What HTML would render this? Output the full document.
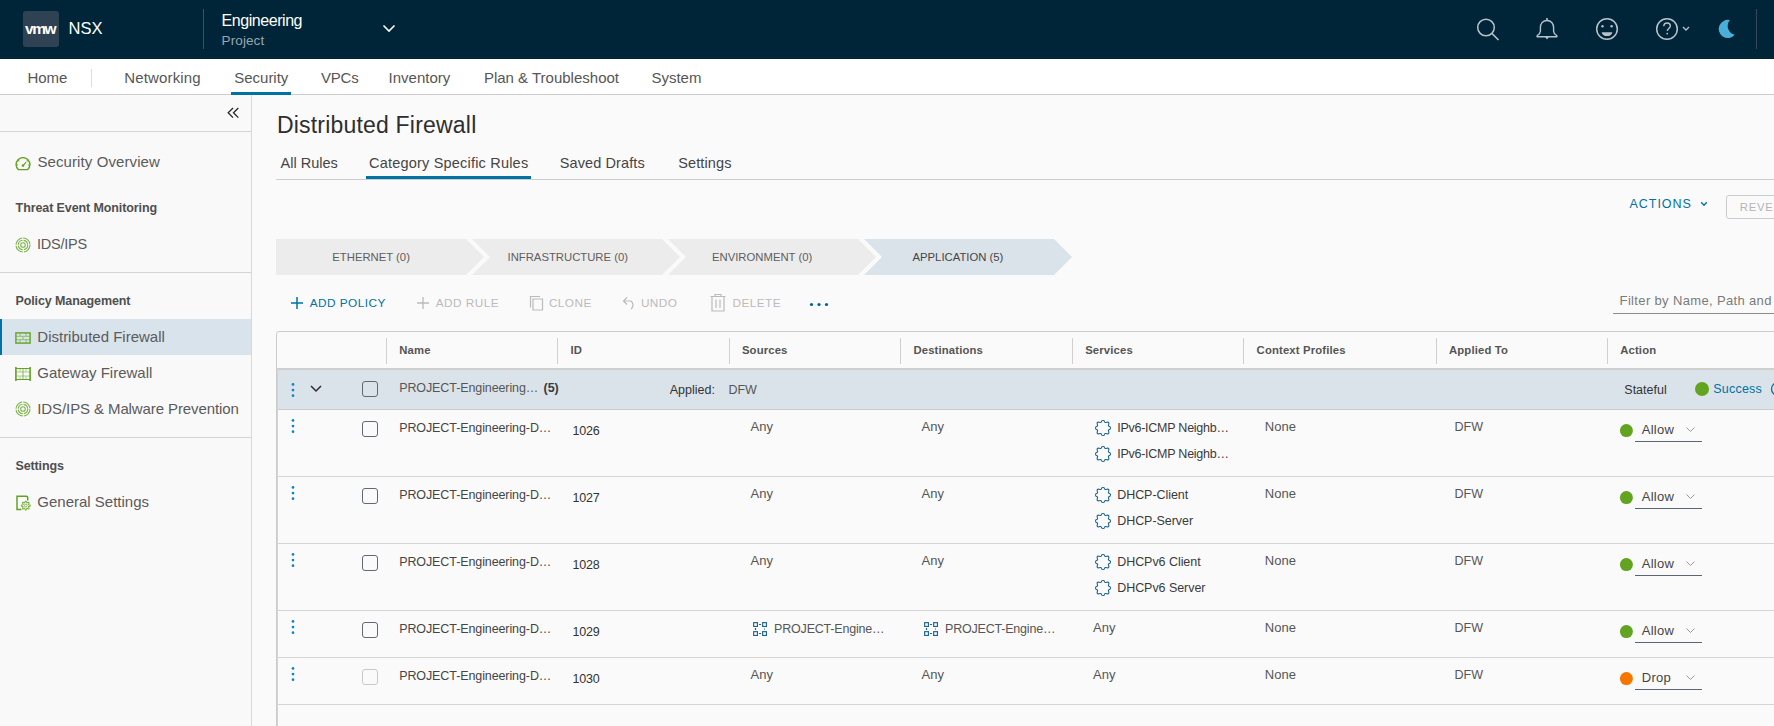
<!DOCTYPE html>
<html><head><meta charset="utf-8"><style>
html,body{margin:0;padding:0;}
body{width:1774px;height:726px;overflow:hidden;position:relative;background:#fafafa;font-family:"Liberation Sans",sans-serif;}
.t{position:absolute;line-height:1;white-space:nowrap;}
.r{position:absolute;display:block;}
</style></head><body>
<div class="r" style="left:0px;top:0px;width:1774px;height:59px;background:#002538;"></div>
<div class="r" style="left:23px;top:11px;width:36px;height:36px;background:#2f4254;border-radius:3px;"></div>
<div class="t" style="left:25.0px;top:20.68px;font-size:15.5px;color:#fff;font-weight:700;letter-spacing:-1.4px;">vmw</div>
<div class="t" style="left:68.6px;top:20.23px;font-size:16.5px;color:#fff;">NSX</div>
<div class="r" style="left:203px;top:9px;width:1px;height:40px;background:#3c5162;"></div>
<div class="t" style="left:221.6px;top:12.96px;font-size:16px;color:#fff;letter-spacing:-0.45px;">Engineering</div>
<div class="t" style="left:221.6px;top:34.27px;font-size:13.5px;color:#9aa6b0;letter-spacing:0.1px;">Project</div>
<svg class="r" style="left:382px;top:23px;" width="14" height="11" viewBox="0 0 14 11"><path d="M1.5 2.5 L7 8 L12.5 2.5" fill="none" stroke="#fff" stroke-width="1.6"/></svg>
<svg class="r" style="left:1474px;top:16px;" width="28" height="28" viewBox="0 0 28 28"><circle cx="12" cy="11.5" r="8.3" fill="none" stroke="#b9c2c9" stroke-width="1.5"/><path d="M18 17.5 L24.5 24" stroke="#b9c2c9" stroke-width="1.6"/></svg>
<svg class="r" style="left:1535px;top:16px;" width="24" height="26" viewBox="0 0 24 26"><path d="M12 4.5 c-4 0 -6.6 3 -6.6 7.3 v3.4 c0 1.8 -1.3 3.2 -3.3 4.6 v0.9 h19.8 v-0.9 c-2 -1.4 -3.3 -2.8 -3.3 -4.6 v-3.4 c0 -4.3 -2.6 -7.3 -6.6 -7.3z" fill="none" stroke="#b9c2c9" stroke-width="1.4" stroke-linejoin="round"/><path d="M12 2 V4.5" stroke="#b9c2c9" stroke-width="1.6"/><path d="M10.2 21 h3.6 l-1.8 2.6z" fill="#b9c2c9"/></svg>
<svg class="r" style="left:1594px;top:16px;" width="26" height="26" viewBox="0 0 26 26"><circle cx="13" cy="13" r="10.3" fill="none" stroke="#b9c2c9" stroke-width="1.5"/><circle cx="8.5" cy="10.3" r="1.2" fill="#b9c2c9"/><circle cx="17.6" cy="10.3" r="1.2" fill="#b9c2c9"/><path d="M7.6 16.2 h10.8 c-0.6 2.6 -2.8 3.9 -5.4 3.9 s-4.8 -1.3 -5.4 -3.9z" fill="#b9c2c9"/></svg>
<svg class="r" style="left:1654px;top:16px;" width="38" height="26" viewBox="0 0 38 26"><circle cx="13" cy="13" r="10.3" fill="none" stroke="#b9c2c9" stroke-width="1.5"/><path d="M9.8 10.3 c0 -2 1.4 -3.3 3.3 -3.3 s3.2 1.3 3.2 3 c0 2.4 -3 2.6 -3 5" fill="none" stroke="#b9c2c9" stroke-width="1.4"/><circle cx="13.2" cy="17.6" r="0.9" fill="#b9c2c9"/><path d="M29 11 l3 3 l3 -3" fill="none" stroke="#b9c2c9" stroke-width="1.3"/></svg>
<svg class="r" style="left:1716px;top:17px;" width="22" height="24" viewBox="0 0 22 24"><path d="M13.9 3.1 A9.1 9.1 0 1 0 18.8 17.8 A9 9 0 0 1 13.9 3.1z" fill="#49afd9"/></svg>
<div class="r" style="left:1756px;top:9px;width:1px;height:40px;background:#34495a;"></div>
<div class="r" style="left:0px;top:59px;width:1774px;height:35px;background:#ffffff;"></div>
<div class="r" style="left:0px;top:94px;width:1774px;height:1px;background:#cccccc;"></div>
<div class="t" style="left:27.4px;top:70.30px;font-size:15px;color:#565656;">Home</div>
<div class="r" style="left:91px;top:69px;width:1px;height:18px;background:#dddddd;"></div>
<div class="t" style="left:124.3px;top:70.30px;font-size:15px;color:#565656;letter-spacing:0.15px;">Networking</div>
<div class="t" style="left:234.2px;top:70.30px;font-size:15px;color:#565656;">Security</div>
<div class="r" style="left:231px;top:92px;width:60px;height:3px;background:#0072a3;"></div>
<div class="t" style="left:320.9px;top:70.30px;font-size:15px;color:#565656;letter-spacing:-0.2px;">VPCs</div>
<div class="t" style="left:388.6px;top:70.30px;font-size:15px;color:#565656;">Inventory</div>
<div class="t" style="left:483.9px;top:70.30px;font-size:15px;color:#565656;">Plan &amp; Troubleshoot</div>
<div class="t" style="left:651.4px;top:70.30px;font-size:15px;color:#565656;">System</div>
<div class="r" style="left:0px;top:95px;width:251px;height:631px;background:#f9f9f9;"></div>
<div class="r" style="left:251px;top:95px;width:1px;height:631px;background:#d9d9d9;"></div>
<svg class="r" style="left:225px;top:105px;" width="16" height="16" viewBox="0 0 16 16"><path d="M8 3 L3.2 7.8 L8 12.6 M13.3 3 L8.5 7.8 L13.3 12.6" fill="none" stroke="#262626" stroke-width="1.3"/></svg>
<div class="r" style="left:0px;top:131px;width:251px;height:1px;background:#d5d5d5;"></div>
<svg class="r" style="left:15px;top:157px;" width="16" height="14" viewBox="0 0 16 14"><path d="M3.3 12.6 A6.9 6.9 0 1 1 12.7 12.6 Z" fill="none" stroke="#62a420" stroke-width="1.4" stroke-linejoin="round"/><path d="M8 8.6 L11.2 5.2 M1.5 8 H3 M13 8 H14.5 M3.3 3.3 L4.3 4.3 M12.7 3.3 L11.7 4.3" stroke="#62a420" stroke-width="1.1"/><circle cx="8" cy="8.6" r="1.3" fill="#62a420"/></svg>
<div class="t" style="left:37.4px;top:153.90px;font-size:15px;color:#5b5b5b;letter-spacing:0.1px;">Security Overview</div>
<div class="t" style="left:15.6px;top:202.12px;font-size:12.5px;color:#4f4f4f;font-weight:700;letter-spacing:-0.1px;">Threat Event Monitoring</div>
<svg class="r" style="left:15px;top:237px;" width="16" height="16" viewBox="0 0 16 16"><circle cx="8" cy="8" r="7" fill="none" stroke="#62a420" stroke-width="1.1" stroke-dasharray="10 1" opacity="0.8"/><circle cx="8" cy="8" r="4.7" fill="none" stroke="#62a420" stroke-width="1.1" stroke-dasharray="6.3 1.1" opacity="0.8"/><circle cx="8" cy="8" r="2.3" fill="none" stroke="#62a420" stroke-width="1.1" opacity="0.8"/></svg>
<div class="t" style="left:37.1px;top:237.13px;font-size:14.5px;color:#5b5b5b;letter-spacing:-0.25px;">IDS/IPS</div>
<div class="r" style="left:0px;top:272px;width:251px;height:1px;background:#d5d5d5;"></div>
<div class="t" style="left:15.4px;top:295.02px;font-size:12.5px;color:#4f4f4f;font-weight:700;letter-spacing:-0.1px;">Policy Management</div>
<div class="r" style="left:0px;top:319px;width:251px;height:36px;background:#d9e3eb;"></div>
<div class="r" style="left:0px;top:319px;width:2px;height:36px;background:#0072a3;"></div>
<svg class="r" style="left:15px;top:332px;" width="16" height="12" viewBox="0 0 16 12"><rect x="0.9" y="0.9" width="14.2" height="10.2" fill="none" stroke="#62a420" stroke-width="1.4"/><path d="M1 4.3 H15 M1 7.7 H15 M5 1 V4.3 M11 1 V4.3 M8 4.3 V7.7 M5 7.7 V11 M11 7.7 V11" stroke="#62a420" stroke-width="1" opacity="0.6"/></svg>
<div class="t" style="left:37.3px;top:328.90px;font-size:15px;color:#5b5b5b;">Distributed Firewall</div>
<svg class="r" style="left:15px;top:367px;" width="16" height="14" viewBox="0 0 16 14"><path d="M0.9 0 V14 M15.1 0 V14" stroke="#62a420" stroke-width="1.6" fill="none"/><path d="M1 1.5 H15 M1 12.5 H15" stroke="#62a420" stroke-width="1.2" fill="none"/><path d="M1 5 H15 M1 9 H15 M5 1 V5 M11 1 V5 M5 9 V13 M11 9 V13" stroke="#62a420" stroke-width="1" opacity="0.5"/><path d="M8 1.5 V12.5" stroke="#62a420" stroke-width="2" opacity="0.35"/></svg>
<div class="t" style="left:37.3px;top:364.90px;font-size:15px;color:#5b5b5b;">Gateway Firewall</div>
<svg class="r" style="left:15px;top:401px;" width="16" height="16" viewBox="0 0 16 16"><circle cx="8" cy="8" r="7" fill="none" stroke="#62a420" stroke-width="1.1" stroke-dasharray="10 1" opacity="0.8"/><circle cx="8" cy="8" r="4.7" fill="none" stroke="#62a420" stroke-width="1.1" stroke-dasharray="6.3 1.1" opacity="0.8"/><circle cx="8" cy="8" r="2.3" fill="none" stroke="#62a420" stroke-width="1.1" opacity="0.8"/></svg>
<div class="t" style="left:37.3px;top:400.70px;font-size:15px;color:#5b5b5b;letter-spacing:-0.1px;">IDS/IPS &amp; Malware Prevention</div>
<div class="r" style="left:0px;top:437px;width:251px;height:1px;background:#d5d5d5;"></div>
<div class="t" style="left:15.4px;top:460.02px;font-size:12.5px;color:#4f4f4f;font-weight:700;letter-spacing:-0.1px;">Settings</div>
<svg class="r" style="left:15px;top:495px;" width="18" height="16" viewBox="0 0 18 16"><path d="M6.5 14.6 H2 V1.2 H11.3 A1.4 1.4 0 0 1 12.7 2.6 V5.6" fill="none" stroke="#62a420" stroke-width="1.5"/><polygon points="10.80,6.10 11.22,6.35 11.52,6.97 11.71,7.60 11.91,7.92 12.28,7.84 12.86,7.52 13.51,7.30 13.98,7.42 14.10,7.89 13.88,8.54 13.56,9.12 13.48,9.49 13.80,9.69 14.43,9.88 15.05,10.18 15.30,10.60 15.05,11.02 14.43,11.32 13.80,11.51 13.48,11.71 13.56,12.08 13.88,12.66 14.10,13.31 13.98,13.78 13.51,13.90 12.86,13.68 12.28,13.36 11.91,13.28 11.71,13.60 11.52,14.23 11.22,14.85 10.80,15.10 10.38,14.85 10.08,14.23 9.89,13.60 9.69,13.28 9.32,13.36 8.74,13.68 8.09,13.90 7.62,13.78 7.50,13.31 7.72,12.66 8.04,12.08 8.12,11.71 7.80,11.51 7.17,11.32 6.55,11.02 6.30,10.60 6.55,10.18 7.17,9.88 7.80,9.69 8.12,9.49 8.04,9.12 7.72,8.54 7.50,7.89 7.62,7.42 8.09,7.30 8.74,7.52 9.32,7.84 9.69,7.92 9.89,7.60 10.08,6.97 10.38,6.35" fill="none" stroke="#62a420" stroke-width="1.05" opacity="0.85"/><circle cx="10.8" cy="10.6" r="1.4" fill="none" stroke="#62a420" stroke-width="0.9" opacity="0.8"/></svg>
<div class="t" style="left:37.3px;top:493.90px;font-size:15px;color:#5b5b5b;">General Settings</div>
<div class="r" style="left:252px;top:95px;width:1522px;height:631px;background:#fafafa;"></div>
<div class="t" style="left:276.9px;top:113.53px;font-size:23px;color:#2e2e2e;letter-spacing:0.2px;">Distributed Firewall</div>
<div class="t" style="left:280.6px;top:155.93px;font-size:14.5px;color:#454545;">All Rules</div>
<div class="t" style="left:369.0px;top:155.93px;font-size:14.5px;color:#454545;letter-spacing:0.2px;">Category Specific Rules</div>
<div class="t" style="left:559.8px;top:155.93px;font-size:14.5px;color:#454545;letter-spacing:0.1px;">Saved Drafts</div>
<div class="t" style="left:678.3px;top:155.93px;font-size:14.5px;color:#454545;letter-spacing:0.1px;">Settings</div>
<div class="r" style="left:276px;top:179px;width:1498px;height:1px;background:#cccccc;"></div>
<div class="r" style="left:366px;top:176px;width:165px;height:3px;background:#0072a3;"></div>
<div class="t" style="left:1629.4px;top:198.42px;font-size:12.5px;color:#0072a3;letter-spacing:1.0px;">ACTIONS</div>
<svg class="r" style="left:1699px;top:200px;" width="10" height="8" viewBox="0 0 10 8"><path d="M2.2 2.3 L5 5.2 L7.8 2.3" fill="none" stroke="#0072a3" stroke-width="1.3"/></svg>
<div class="r" style="left:1726px;top:195px;width:60px;height:24px;background:transparent;border:1px solid #cccccc;border-radius:3px;box-sizing:border-box;"></div>
<div class="t" style="left:1739.8px;top:202.33px;font-size:11.3px;color:#b5b5b5;letter-spacing:0.75px;">REVERT</div>
<svg class="r" style="left:276px;top:239px;" width="210" height="36" viewBox="0 0 210 36"><polygon points="0,0 190,0 208,18 190,36 0,36" fill="#ececec"/></svg>
<svg class="r" style="left:472px;top:239px;" width="210" height="36" viewBox="0 0 210 36"><polygon points="0,0 190,0 208,18 190,36 0,36 18,18" fill="#ececec"/></svg>
<svg class="r" style="left:668px;top:239px;" width="210" height="36" viewBox="0 0 210 36"><polygon points="0,0 190,0 208,18 190,36 0,36 18,18" fill="#ececec"/></svg>
<svg class="r" style="left:864px;top:239px;" width="210" height="36" viewBox="0 0 210 36"><polygon points="0,0 190,0 208,18 190,36 0,36 18,18" fill="#dbe3ea"/></svg>
<div class="t" style="left:332.3px;top:252.13px;font-size:11.3px;color:#5e5e5e;">ETHERNET (0)</div>
<div class="t" style="left:507.5px;top:252.13px;font-size:11.3px;color:#5e5e5e;">INFRASTRUCTURE (0)</div>
<div class="t" style="left:712.0px;top:252.13px;font-size:11.3px;color:#5e5e5e;">ENVIRONMENT (0)</div>
<div class="t" style="left:912.5px;top:252.13px;font-size:11.3px;color:#454545;">APPLICATION (5)</div>
<svg class="r" style="left:290px;top:296px;" width="14" height="14" viewBox="0 0 14 14"><path d="M7 1 V13 M1 7 H13" stroke="#0072a3" stroke-width="1.5"/></svg>
<div class="t" style="left:309.8px;top:297.71px;font-size:11.8px;color:#0072a3;letter-spacing:0.45px;">ADD POLICY</div>
<svg class="r" style="left:416px;top:296px;" width="14" height="14" viewBox="0 0 14 14"><path d="M7 1 V13 M1 7 H13" stroke="#bbbbbb" stroke-width="1.3"/></svg>
<div class="t" style="left:435.8px;top:297.71px;font-size:11.8px;color:#bbbbbb;letter-spacing:0.45px;">ADD RULE</div>
<svg class="r" style="left:529px;top:295px;" width="15" height="16" viewBox="0 0 15 16"><path d="M4 4 H13.5 V15 H4 Z M1.5 12.5 V1.5 H11" fill="none" stroke="#bbbbbb" stroke-width="1.2"/></svg>
<div class="t" style="left:548.9px;top:297.71px;font-size:11.8px;color:#bbbbbb;letter-spacing:0.45px;">CLONE</div>
<svg class="r" style="left:622px;top:295px;" width="16" height="16" viewBox="0 0 16 16"><path d="M5 2.5 L1.5 6 L5 9.5 M1.5 6 H9 A5 5 0 0 1 9 14" fill="none" stroke="#bbbbbb" stroke-width="1.2"/></svg>
<div class="t" style="left:640.9px;top:297.71px;font-size:11.8px;color:#bbbbbb;letter-spacing:0.45px;">UNDO</div>
<svg class="r" style="left:709px;top:293px;" width="18" height="20" viewBox="0 0 18 20"><path d="M1.5 3.5 H16.5 M6 3.5 V1.5 H12 V3.5 M3 3.5 V18 H15 V3.5 M7 6.5 V15 M11 6.5 V15" fill="none" stroke="#bbbbbb" stroke-width="1.2"/></svg>
<div class="t" style="left:732.5px;top:297.71px;font-size:11.8px;color:#bbbbbb;letter-spacing:0.45px;">DELETE</div>
<svg class="r" style="left:808px;top:301px;" width="22" height="7" viewBox="0 0 22 7"><circle cx="3.5" cy="3.5" r="1.6" fill="#005f99"/><circle cx="11" cy="3.5" r="1.6" fill="#005f99"/><circle cx="18.5" cy="3.5" r="1.6" fill="#005f99"/></svg>
<div class="t" style="left:1619.6px;top:293.70px;font-size:13px;color:#7a7a7a;letter-spacing:0.35px;">Filter by Name, Path and more</div>
<div class="r" style="left:1613px;top:313px;width:161px;height:1px;background:#8c8c8c;"></div>
<div class="r" style="left:276px;top:331px;width:1600px;height:500px;background:transparent;border:1px solid #cccccc;border-radius:3px;box-sizing:border-box;"></div>
<div class="r" style="left:277px;top:368px;width:1497px;height:2px;background:#cfcfcf;"></div>
<div class="r" style="left:386px;top:338px;width:1px;height:26px;background:#d0d0d0;"></div>
<div class="r" style="left:557px;top:338px;width:1px;height:26px;background:#d0d0d0;"></div>
<div class="r" style="left:729px;top:338px;width:1px;height:26px;background:#d0d0d0;"></div>
<div class="r" style="left:900px;top:338px;width:1px;height:26px;background:#d0d0d0;"></div>
<div class="r" style="left:1072px;top:338px;width:1px;height:26px;background:#d0d0d0;"></div>
<div class="r" style="left:1243px;top:338px;width:1px;height:26px;background:#d0d0d0;"></div>
<div class="r" style="left:1436px;top:338px;width:1px;height:26px;background:#d0d0d0;"></div>
<div class="r" style="left:1607px;top:338px;width:1px;height:26px;background:#d0d0d0;"></div>
<div class="t" style="left:399.3px;top:345.23px;font-size:11.3px;color:#555555;font-weight:700;letter-spacing:0.15px;">Name</div>
<div class="t" style="left:570.5px;top:345.23px;font-size:11.3px;color:#555555;font-weight:700;letter-spacing:0.15px;">ID</div>
<div class="t" style="left:741.9px;top:345.23px;font-size:11.3px;color:#555555;font-weight:700;letter-spacing:0.15px;">Sources</div>
<div class="t" style="left:913.4px;top:345.23px;font-size:11.3px;color:#555555;font-weight:700;letter-spacing:0.15px;">Destinations</div>
<div class="t" style="left:1085.2px;top:345.23px;font-size:11.3px;color:#555555;font-weight:700;letter-spacing:0.15px;">Services</div>
<div class="t" style="left:1256.6px;top:345.23px;font-size:11.3px;color:#555555;font-weight:700;letter-spacing:0.15px;">Context Profiles</div>
<div class="t" style="left:1449.0px;top:345.23px;font-size:11.3px;color:#555555;font-weight:700;letter-spacing:0.15px;">Applied To</div>
<div class="t" style="left:1620.2px;top:345.23px;font-size:11.3px;color:#555555;font-weight:700;letter-spacing:0.15px;">Action</div>
<div class="r" style="left:277px;top:370px;width:1497px;height:39px;background:#dbe3ea;"></div>
<div class="r" style="left:277px;top:409px;width:1497px;height:1px;background:#cccccc;"></div>
<svg class="r" style="left:290px;top:382px;" width="6" height="16" viewBox="0 0 6 16"><circle cx="3" cy="2.4" r="1.35" fill="#0a85c7"/><circle cx="3" cy="8.05" r="1.35" fill="#0a85c7"/><circle cx="3" cy="13.7" r="1.35" fill="#0a85c7"/></svg>
<svg class="r" style="left:309px;top:384px;" width="14" height="10" viewBox="0 0 14 10"><path d="M2 2 L7 7 L12 2" fill="none" stroke="#2d2d2d" stroke-width="1.5"/></svg>
<div class="r" style="left:362px;top:381px;width:16px;height:16px;background:transparent;border:1px solid #5f6a74;border-radius:3px;box-sizing:border-box;"></div>
<div class="t" style="left:399.2px;top:382.42px;font-size:12.5px;color:#565656;letter-spacing:-0.1px;">PROJECT-Engineering…</div>
<div class="t" style="left:543.5px;top:382.42px;font-size:12.5px;color:#3a3a3a;font-weight:700;">(5)</div>
<div class="t" style="left:669.7px;top:383.72px;font-size:12.5px;color:#333;">Applied:</div>
<div class="t" style="left:728.4px;top:383.72px;font-size:12.5px;color:#565656;">DFW</div>
<div class="t" style="left:1624.3px;top:383.72px;font-size:12.5px;color:#333;">Stateful</div>
<svg class="r" style="left:1694px;top:381px;" width="16" height="16" viewBox="0 0 16 16"><circle cx="8" cy="8" r="7" fill="#62a420"/></svg>
<div class="t" style="left:1713.3px;top:382.92px;font-size:12.5px;color:#0072a3;letter-spacing:0.2px;">Success</div>
<svg class="r" style="left:1770px;top:381px;" width="14" height="16" viewBox="0 0 14 16"><circle cx="8" cy="8" r="6.5" fill="none" stroke="#0072a3" stroke-width="1.3"/></svg>
<div class="r" style="left:277px;top:476px;width:1497px;height:1px;background:#d5d5d5;"></div>
<svg class="r" style="left:290px;top:418px;" width="6" height="16" viewBox="0 0 6 16"><circle cx="3" cy="2.4" r="1.35" fill="#0a85c7"/><circle cx="3" cy="8.05" r="1.35" fill="#0a85c7"/><circle cx="3" cy="13.7" r="1.35" fill="#0a85c7"/></svg>
<div class="r" style="left:362px;top:421px;width:16px;height:16px;background:transparent;border:1px solid #5f6a74;border-radius:3px;box-sizing:border-box;"></div>
<div class="t" style="left:399.2px;top:422.22px;font-size:12.5px;color:#454545;letter-spacing:-0.1px;">PROJECT-Engineering-D…</div>
<div class="t" style="left:572.4px;top:425.22px;font-size:12.5px;color:#333;letter-spacing:-0.2px;">1026</div>
<div class="t" style="left:750.5px;top:420.00px;font-size:13px;color:#565656;">Any</div>
<div class="t" style="left:921.5px;top:420.00px;font-size:13px;color:#565656;">Any</div>
<svg class="r" style="left:1095px;top:420px;" width="16" height="16" viewBox="0 0 16 16"><polygon points="8.00,0.10 8.75,0.43 9.35,1.23 9.80,2.07 10.26,2.55 10.92,2.54 11.83,2.26 12.83,2.12 13.59,2.41 13.88,3.17 13.74,4.17 13.46,5.08 13.45,5.74 13.93,6.20 14.77,6.65 15.57,7.25 15.90,8.00 15.57,8.75 14.77,9.35 13.93,9.80 13.45,10.26 13.46,10.92 13.74,11.83 13.88,12.83 13.59,13.59 12.83,13.88 11.83,13.74 10.92,13.46 10.26,13.45 9.80,13.93 9.35,14.77 8.75,15.57 8.00,15.90 7.25,15.57 6.65,14.77 6.20,13.93 5.74,13.45 5.08,13.46 4.17,13.74 3.17,13.88 2.41,13.59 2.12,12.83 2.26,11.83 2.54,10.92 2.55,10.26 2.07,9.80 1.23,9.35 0.43,8.75 0.10,8.00 0.43,7.25 1.23,6.65 2.07,6.20 2.55,5.74 2.54,5.08 2.26,4.17 2.12,3.17 2.41,2.41 3.17,2.12 4.17,2.26 5.08,2.54 5.74,2.55 6.20,2.07 6.65,1.23 7.25,0.43" fill="none" stroke="#1f6590" stroke-width="1.1"/></svg>
<div class="t" style="left:1117.2px;top:422.22px;font-size:12.5px;color:#3a3a3a;letter-spacing:-0.25px;">IPv6-ICMP Neighb…</div>
<svg class="r" style="left:1095px;top:446px;" width="16" height="16" viewBox="0 0 16 16"><polygon points="8.00,0.10 8.75,0.43 9.35,1.23 9.80,2.07 10.26,2.55 10.92,2.54 11.83,2.26 12.83,2.12 13.59,2.41 13.88,3.17 13.74,4.17 13.46,5.08 13.45,5.74 13.93,6.20 14.77,6.65 15.57,7.25 15.90,8.00 15.57,8.75 14.77,9.35 13.93,9.80 13.45,10.26 13.46,10.92 13.74,11.83 13.88,12.83 13.59,13.59 12.83,13.88 11.83,13.74 10.92,13.46 10.26,13.45 9.80,13.93 9.35,14.77 8.75,15.57 8.00,15.90 7.25,15.57 6.65,14.77 6.20,13.93 5.74,13.45 5.08,13.46 4.17,13.74 3.17,13.88 2.41,13.59 2.12,12.83 2.26,11.83 2.54,10.92 2.55,10.26 2.07,9.80 1.23,9.35 0.43,8.75 0.10,8.00 0.43,7.25 1.23,6.65 2.07,6.20 2.55,5.74 2.54,5.08 2.26,4.17 2.12,3.17 2.41,2.41 3.17,2.12 4.17,2.26 5.08,2.54 5.74,2.55 6.20,2.07 6.65,1.23 7.25,0.43" fill="none" stroke="#1f6590" stroke-width="1.1"/></svg>
<div class="t" style="left:1117.2px;top:448.22px;font-size:12.5px;color:#3a3a3a;letter-spacing:-0.25px;">IPv6-ICMP Neighb…</div>
<div class="t" style="left:1264.8px;top:420.00px;font-size:13px;color:#565656;">None</div>
<div class="t" style="left:1454.5px;top:421.22px;font-size:12.5px;color:#565656;">DFW</div>
<svg class="r" style="left:1619px;top:423px;" width="15" height="15" viewBox="0 0 15 15"><circle cx="7.4" cy="7.6" r="6.5" fill="#62a420"/></svg>
<div class="t" style="left:1641.7px;top:422.50px;font-size:13px;color:#454545;letter-spacing:0.3px;">Allow</div>
<svg class="r" style="left:1685px;top:426px;" width="12" height="8" viewBox="0 0 12 8"><path d="M1.5 1.5 L5.5 5.5 L9.5 1.5" fill="none" stroke="#9a9a9a" stroke-width="1"/></svg>
<div class="r" style="left:1635px;top:441px;width:67px;height:1px;background:#5b6570;"></div>
<div class="r" style="left:277px;top:543px;width:1497px;height:1px;background:#d5d5d5;"></div>
<svg class="r" style="left:290px;top:485px;" width="6" height="16" viewBox="0 0 6 16"><circle cx="3" cy="2.4" r="1.35" fill="#0a85c7"/><circle cx="3" cy="8.05" r="1.35" fill="#0a85c7"/><circle cx="3" cy="13.7" r="1.35" fill="#0a85c7"/></svg>
<div class="r" style="left:362px;top:488px;width:16px;height:16px;background:transparent;border:1px solid #5f6a74;border-radius:3px;box-sizing:border-box;"></div>
<div class="t" style="left:399.2px;top:489.22px;font-size:12.5px;color:#454545;letter-spacing:-0.1px;">PROJECT-Engineering-D…</div>
<div class="t" style="left:572.4px;top:492.22px;font-size:12.5px;color:#333;letter-spacing:-0.2px;">1027</div>
<div class="t" style="left:750.5px;top:487.00px;font-size:13px;color:#565656;">Any</div>
<div class="t" style="left:921.5px;top:487.00px;font-size:13px;color:#565656;">Any</div>
<svg class="r" style="left:1095px;top:487px;" width="16" height="16" viewBox="0 0 16 16"><polygon points="8.00,0.10 8.75,0.43 9.35,1.23 9.80,2.07 10.26,2.55 10.92,2.54 11.83,2.26 12.83,2.12 13.59,2.41 13.88,3.17 13.74,4.17 13.46,5.08 13.45,5.74 13.93,6.20 14.77,6.65 15.57,7.25 15.90,8.00 15.57,8.75 14.77,9.35 13.93,9.80 13.45,10.26 13.46,10.92 13.74,11.83 13.88,12.83 13.59,13.59 12.83,13.88 11.83,13.74 10.92,13.46 10.26,13.45 9.80,13.93 9.35,14.77 8.75,15.57 8.00,15.90 7.25,15.57 6.65,14.77 6.20,13.93 5.74,13.45 5.08,13.46 4.17,13.74 3.17,13.88 2.41,13.59 2.12,12.83 2.26,11.83 2.54,10.92 2.55,10.26 2.07,9.80 1.23,9.35 0.43,8.75 0.10,8.00 0.43,7.25 1.23,6.65 2.07,6.20 2.55,5.74 2.54,5.08 2.26,4.17 2.12,3.17 2.41,2.41 3.17,2.12 4.17,2.26 5.08,2.54 5.74,2.55 6.20,2.07 6.65,1.23 7.25,0.43" fill="none" stroke="#1f6590" stroke-width="1.1"/></svg>
<div class="t" style="left:1117.2px;top:489.22px;font-size:12.5px;color:#3a3a3a;letter-spacing:-0.05px;">DHCP-Client</div>
<svg class="r" style="left:1095px;top:513px;" width="16" height="16" viewBox="0 0 16 16"><polygon points="8.00,0.10 8.75,0.43 9.35,1.23 9.80,2.07 10.26,2.55 10.92,2.54 11.83,2.26 12.83,2.12 13.59,2.41 13.88,3.17 13.74,4.17 13.46,5.08 13.45,5.74 13.93,6.20 14.77,6.65 15.57,7.25 15.90,8.00 15.57,8.75 14.77,9.35 13.93,9.80 13.45,10.26 13.46,10.92 13.74,11.83 13.88,12.83 13.59,13.59 12.83,13.88 11.83,13.74 10.92,13.46 10.26,13.45 9.80,13.93 9.35,14.77 8.75,15.57 8.00,15.90 7.25,15.57 6.65,14.77 6.20,13.93 5.74,13.45 5.08,13.46 4.17,13.74 3.17,13.88 2.41,13.59 2.12,12.83 2.26,11.83 2.54,10.92 2.55,10.26 2.07,9.80 1.23,9.35 0.43,8.75 0.10,8.00 0.43,7.25 1.23,6.65 2.07,6.20 2.55,5.74 2.54,5.08 2.26,4.17 2.12,3.17 2.41,2.41 3.17,2.12 4.17,2.26 5.08,2.54 5.74,2.55 6.20,2.07 6.65,1.23 7.25,0.43" fill="none" stroke="#1f6590" stroke-width="1.1"/></svg>
<div class="t" style="left:1117.2px;top:515.22px;font-size:12.5px;color:#3a3a3a;letter-spacing:-0.05px;">DHCP-Server</div>
<div class="t" style="left:1264.8px;top:487.00px;font-size:13px;color:#565656;">None</div>
<div class="t" style="left:1454.5px;top:488.22px;font-size:12.5px;color:#565656;">DFW</div>
<svg class="r" style="left:1619px;top:490px;" width="15" height="15" viewBox="0 0 15 15"><circle cx="7.4" cy="7.6" r="6.5" fill="#62a420"/></svg>
<div class="t" style="left:1641.7px;top:489.50px;font-size:13px;color:#454545;letter-spacing:0.3px;">Allow</div>
<svg class="r" style="left:1685px;top:493px;" width="12" height="8" viewBox="0 0 12 8"><path d="M1.5 1.5 L5.5 5.5 L9.5 1.5" fill="none" stroke="#9a9a9a" stroke-width="1"/></svg>
<div class="r" style="left:1635px;top:508px;width:67px;height:1px;background:#5b6570;"></div>
<div class="r" style="left:277px;top:610px;width:1497px;height:1px;background:#d5d5d5;"></div>
<svg class="r" style="left:290px;top:552px;" width="6" height="16" viewBox="0 0 6 16"><circle cx="3" cy="2.4" r="1.35" fill="#0a85c7"/><circle cx="3" cy="8.05" r="1.35" fill="#0a85c7"/><circle cx="3" cy="13.7" r="1.35" fill="#0a85c7"/></svg>
<div class="r" style="left:362px;top:555px;width:16px;height:16px;background:transparent;border:1px solid #5f6a74;border-radius:3px;box-sizing:border-box;"></div>
<div class="t" style="left:399.2px;top:556.22px;font-size:12.5px;color:#454545;letter-spacing:-0.1px;">PROJECT-Engineering-D…</div>
<div class="t" style="left:572.4px;top:559.22px;font-size:12.5px;color:#333;letter-spacing:-0.2px;">1028</div>
<div class="t" style="left:750.5px;top:554.00px;font-size:13px;color:#565656;">Any</div>
<div class="t" style="left:921.5px;top:554.00px;font-size:13px;color:#565656;">Any</div>
<svg class="r" style="left:1095px;top:554px;" width="16" height="16" viewBox="0 0 16 16"><polygon points="8.00,0.10 8.75,0.43 9.35,1.23 9.80,2.07 10.26,2.55 10.92,2.54 11.83,2.26 12.83,2.12 13.59,2.41 13.88,3.17 13.74,4.17 13.46,5.08 13.45,5.74 13.93,6.20 14.77,6.65 15.57,7.25 15.90,8.00 15.57,8.75 14.77,9.35 13.93,9.80 13.45,10.26 13.46,10.92 13.74,11.83 13.88,12.83 13.59,13.59 12.83,13.88 11.83,13.74 10.92,13.46 10.26,13.45 9.80,13.93 9.35,14.77 8.75,15.57 8.00,15.90 7.25,15.57 6.65,14.77 6.20,13.93 5.74,13.45 5.08,13.46 4.17,13.74 3.17,13.88 2.41,13.59 2.12,12.83 2.26,11.83 2.54,10.92 2.55,10.26 2.07,9.80 1.23,9.35 0.43,8.75 0.10,8.00 0.43,7.25 1.23,6.65 2.07,6.20 2.55,5.74 2.54,5.08 2.26,4.17 2.12,3.17 2.41,2.41 3.17,2.12 4.17,2.26 5.08,2.54 5.74,2.55 6.20,2.07 6.65,1.23 7.25,0.43" fill="none" stroke="#1f6590" stroke-width="1.1"/></svg>
<div class="t" style="left:1117.2px;top:556.22px;font-size:12.5px;color:#3a3a3a;letter-spacing:-0.05px;">DHCPv6 Client</div>
<svg class="r" style="left:1095px;top:580px;" width="16" height="16" viewBox="0 0 16 16"><polygon points="8.00,0.10 8.75,0.43 9.35,1.23 9.80,2.07 10.26,2.55 10.92,2.54 11.83,2.26 12.83,2.12 13.59,2.41 13.88,3.17 13.74,4.17 13.46,5.08 13.45,5.74 13.93,6.20 14.77,6.65 15.57,7.25 15.90,8.00 15.57,8.75 14.77,9.35 13.93,9.80 13.45,10.26 13.46,10.92 13.74,11.83 13.88,12.83 13.59,13.59 12.83,13.88 11.83,13.74 10.92,13.46 10.26,13.45 9.80,13.93 9.35,14.77 8.75,15.57 8.00,15.90 7.25,15.57 6.65,14.77 6.20,13.93 5.74,13.45 5.08,13.46 4.17,13.74 3.17,13.88 2.41,13.59 2.12,12.83 2.26,11.83 2.54,10.92 2.55,10.26 2.07,9.80 1.23,9.35 0.43,8.75 0.10,8.00 0.43,7.25 1.23,6.65 2.07,6.20 2.55,5.74 2.54,5.08 2.26,4.17 2.12,3.17 2.41,2.41 3.17,2.12 4.17,2.26 5.08,2.54 5.74,2.55 6.20,2.07 6.65,1.23 7.25,0.43" fill="none" stroke="#1f6590" stroke-width="1.1"/></svg>
<div class="t" style="left:1117.2px;top:582.22px;font-size:12.5px;color:#3a3a3a;letter-spacing:-0.05px;">DHCPv6 Server</div>
<div class="t" style="left:1264.8px;top:554.00px;font-size:13px;color:#565656;">None</div>
<div class="t" style="left:1454.5px;top:555.22px;font-size:12.5px;color:#565656;">DFW</div>
<svg class="r" style="left:1619px;top:557px;" width="15" height="15" viewBox="0 0 15 15"><circle cx="7.4" cy="7.6" r="6.5" fill="#62a420"/></svg>
<div class="t" style="left:1641.7px;top:556.50px;font-size:13px;color:#454545;letter-spacing:0.3px;">Allow</div>
<svg class="r" style="left:1685px;top:560px;" width="12" height="8" viewBox="0 0 12 8"><path d="M1.5 1.5 L5.5 5.5 L9.5 1.5" fill="none" stroke="#9a9a9a" stroke-width="1"/></svg>
<div class="r" style="left:1635px;top:575px;width:67px;height:1px;background:#5b6570;"></div>
<div class="r" style="left:277px;top:657px;width:1497px;height:1px;background:#d5d5d5;"></div>
<svg class="r" style="left:290px;top:619px;" width="6" height="16" viewBox="0 0 6 16"><circle cx="3" cy="2.4" r="1.35" fill="#0a85c7"/><circle cx="3" cy="8.05" r="1.35" fill="#0a85c7"/><circle cx="3" cy="13.7" r="1.35" fill="#0a85c7"/></svg>
<div class="r" style="left:362px;top:622px;width:16px;height:16px;background:transparent;border:1px solid #5f6a74;border-radius:3px;box-sizing:border-box;"></div>
<div class="t" style="left:399.2px;top:623.22px;font-size:12.5px;color:#454545;letter-spacing:-0.1px;">PROJECT-Engineering-D…</div>
<div class="t" style="left:572.4px;top:626.22px;font-size:12.5px;color:#333;letter-spacing:-0.2px;">1029</div>
<svg class="r" style="left:752px;top:621.0px;" width="16" height="16" viewBox="0 0 16 16"><rect x="1.65" y="1.65" width="3.8" height="3.8" fill="none" stroke="#1f6590" stroke-width="1.15"/><rect x="10.65" y="1.65" width="3.8" height="3.8" fill="none" stroke="#1f6590" stroke-width="1.15"/><rect x="1.65" y="10.65" width="3.8" height="3.8" fill="none" stroke="#1f6590" stroke-width="1.15"/><rect x="10.65" y="10.65" width="3.8" height="3.8" fill="none" stroke="#1f6590" stroke-width="1.15"/><path d="M7 3.5 H9 M7 12.5 H9 M3.5 7 V9" stroke="#1f6590" stroke-width="1.2"/><path d="M12.5 7 V9" stroke="#1f6590" stroke-width="1" opacity="0.5"/></svg>
<div class="t" style="left:774.1px;top:622.72px;font-size:12.5px;color:#565656;letter-spacing:-0.2px;">PROJECT-Engine…</div>
<svg class="r" style="left:923px;top:621.0px;" width="16" height="16" viewBox="0 0 16 16"><rect x="1.65" y="1.65" width="3.8" height="3.8" fill="none" stroke="#1f6590" stroke-width="1.15"/><rect x="10.65" y="1.65" width="3.8" height="3.8" fill="none" stroke="#1f6590" stroke-width="1.15"/><rect x="1.65" y="10.65" width="3.8" height="3.8" fill="none" stroke="#1f6590" stroke-width="1.15"/><rect x="10.65" y="10.65" width="3.8" height="3.8" fill="none" stroke="#1f6590" stroke-width="1.15"/><path d="M7 3.5 H9 M7 12.5 H9 M3.5 7 V9" stroke="#1f6590" stroke-width="1.2"/><path d="M12.5 7 V9" stroke="#1f6590" stroke-width="1" opacity="0.5"/></svg>
<div class="t" style="left:945.0px;top:622.72px;font-size:12.5px;color:#565656;letter-spacing:-0.2px;">PROJECT-Engine…</div>
<div class="t" style="left:1093.0px;top:621.00px;font-size:13px;color:#565656;">Any</div>
<div class="t" style="left:1264.8px;top:621.00px;font-size:13px;color:#565656;">None</div>
<div class="t" style="left:1454.5px;top:622.22px;font-size:12.5px;color:#565656;">DFW</div>
<svg class="r" style="left:1619px;top:624px;" width="15" height="15" viewBox="0 0 15 15"><circle cx="7.4" cy="7.6" r="6.5" fill="#62a420"/></svg>
<div class="t" style="left:1641.7px;top:623.50px;font-size:13px;color:#454545;letter-spacing:0.3px;">Allow</div>
<svg class="r" style="left:1685px;top:627px;" width="12" height="8" viewBox="0 0 12 8"><path d="M1.5 1.5 L5.5 5.5 L9.5 1.5" fill="none" stroke="#9a9a9a" stroke-width="1"/></svg>
<div class="r" style="left:1635px;top:642px;width:67px;height:1px;background:#5b6570;"></div>
<div class="r" style="left:277px;top:704px;width:1497px;height:1px;background:#d5d5d5;"></div>
<svg class="r" style="left:290px;top:666px;" width="6" height="16" viewBox="0 0 6 16"><circle cx="3" cy="2.4" r="1.35" fill="#0a85c7"/><circle cx="3" cy="8.05" r="1.35" fill="#0a85c7"/><circle cx="3" cy="13.7" r="1.35" fill="#0a85c7"/></svg>
<div class="r" style="left:362px;top:669px;width:16px;height:16px;background:transparent;border:1px solid #c8c8c8;border-radius:3px;box-sizing:border-box;"></div>
<div class="t" style="left:399.2px;top:670.22px;font-size:12.5px;color:#454545;letter-spacing:-0.1px;">PROJECT-Engineering-D…</div>
<div class="t" style="left:572.4px;top:673.22px;font-size:12.5px;color:#333;letter-spacing:-0.2px;">1030</div>
<div class="t" style="left:750.5px;top:668.00px;font-size:13px;color:#565656;">Any</div>
<div class="t" style="left:921.5px;top:668.00px;font-size:13px;color:#565656;">Any</div>
<div class="t" style="left:1093.0px;top:668.00px;font-size:13px;color:#565656;">Any</div>
<div class="t" style="left:1264.8px;top:668.00px;font-size:13px;color:#565656;">None</div>
<div class="t" style="left:1454.5px;top:669.22px;font-size:12.5px;color:#565656;">DFW</div>
<svg class="r" style="left:1619px;top:671px;" width="15" height="15" viewBox="0 0 15 15"><circle cx="7.4" cy="7.6" r="6.5" fill="#f57600"/></svg>
<div class="t" style="left:1641.7px;top:670.50px;font-size:13px;color:#454545;letter-spacing:0.3px;">Drop</div>
<svg class="r" style="left:1685px;top:674px;" width="12" height="8" viewBox="0 0 12 8"><path d="M1.5 1.5 L5.5 5.5 L9.5 1.5" fill="none" stroke="#9a9a9a" stroke-width="1"/></svg>
<div class="r" style="left:1635px;top:689px;width:67px;height:1px;background:#5b6570;"></div>
<div class="r" style="left:277px;top:369px;width:1px;height:357px;background:#d2d2d2;"></div>
</body></html>
